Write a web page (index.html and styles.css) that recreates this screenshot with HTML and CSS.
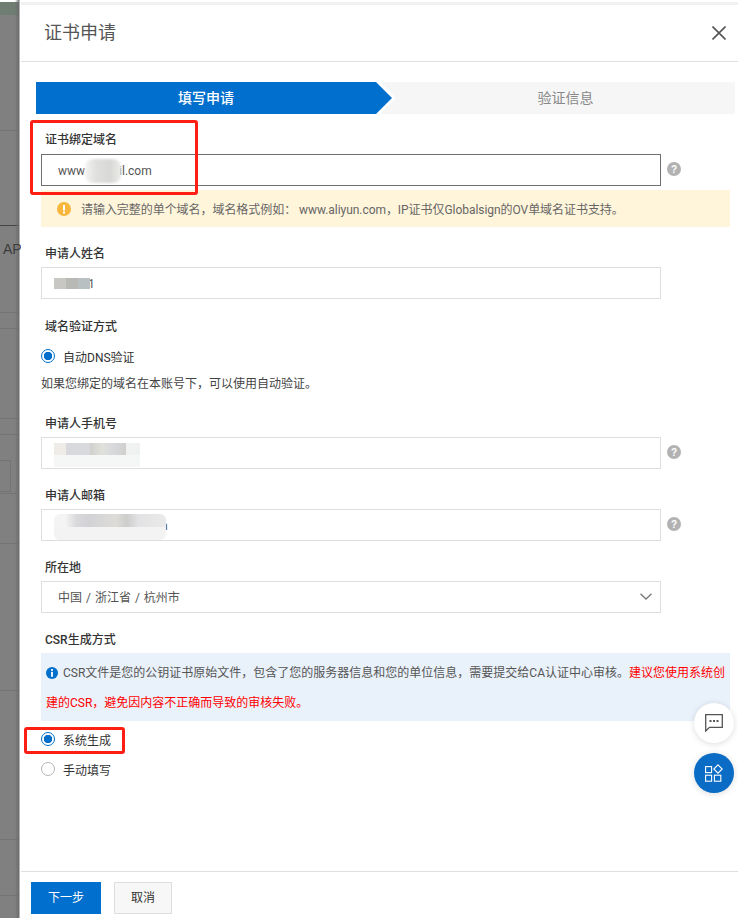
FILE: index.html
```html
<!DOCTYPE html>
<html lang="zh-CN">
<head>
<meta charset="utf-8">
<title>证书申请</title>
<link rel="stylesheet" href="styles.css">
</head>
<body>
<div class="backdrop"><span class="backdrop-text">AP</span></div>
<main class="panel">
  <header class="panel-header">
    <h1 class="panel-title">证书申请</h1>
    <svg class="close-icon" width="14" height="14" viewBox="0 0 14 14"><path d="M.5.5l13 13M13.500.5l-13 13" fill="none" stroke="#555" stroke-width="1.6"/></svg>
  </header>
  <div class="form">
    <div class="steps">
      <div class="step-edge"><div class="step-on">填写申请</div></div>
      <div class="step-off">验证信息</div>
    </div>

    <div class="field field-first">
      <div class="label label-wide">证书绑定域名</div>
      <div class="input-row">
        <div class="input input-active">www<span class="mask mask-domain"></span>il.com</div>
        <svg class="help" width="14" height="14" viewBox="0 0 14 14"><circle cx="7" cy="7" r="7" fill="#b2b2b2"/><text x="7" y="10.5" text-anchor="middle" class="help-mark">?</text></svg>
      </div>
      <div class="warn">
        <svg class="warn-icon" width="14" height="14" viewBox="0 0 14 14"><circle cx="7" cy="7" r="7" fill="#f6b73c"/><rect x="6" y="3" width="2" height="5.5" fill="#fff"/><rect x="6" y="9.5" width="2" height="2" fill="#fff"/></svg>
        <span>请输入完整的单个域名，域名格式例如： www.aliyun.com，IP证书仅Globalsign的OV单域名证书支持。</span>
      </div>
    </div>

    <div class="field field-name">
      <div class="label">申请人姓名</div>
      <div class="input-row">
        <div class="input"><span class="mask mask-name"></span><span class="tail-name">1</span></div>
      </div>
    </div>

    <div class="field field-verify">
      <div class="label">域名验证方式</div>
      <div class="radio-row radio-dns"><span class="radio radio-on"></span>自动DNS验证</div>
      <div class="hint">如果您绑定的域名在本账号下，可以使用自动验证。</div>
    </div>

    <div class="field field-phone">
      <div class="label">申请人手机号</div>
      <div class="input-row">
        <div class="input"><span class="mask mask-phone"></span></div>
        <svg class="help" width="14" height="14" viewBox="0 0 14 14"><circle cx="7" cy="7" r="7" fill="#b2b2b2"/><text x="7" y="10.5" text-anchor="middle" class="help-mark">?</text></svg>
      </div>
    </div>

    <div class="field field-mail">
      <div class="label">申请人邮箱</div>
      <div class="input-row">
        <div class="input"><span class="mask mask-mail"></span><span class="tail-mail">n</span></div>
        <svg class="help" width="14" height="14" viewBox="0 0 14 14"><circle cx="7" cy="7" r="7" fill="#b2b2b2"/><text x="7" y="10.5" text-anchor="middle" class="help-mark">?</text></svg>
      </div>
    </div>

    <div class="field field-mail">
      <div class="label">所在地</div>
      <div class="input-row">
        <div class="input input-select">
          <span class="region">中国 / 浙江省 / 杭州市</span>
          <svg width="12" height="7" viewBox="0 0 12 7"><path d="M.5.7L6 6l5.500-5.300" fill="none" stroke="#777" stroke-width="1.300"/></svg>
        </div>
      </div>
    </div>

    <div class="field field-mail">
      <div class="label">CSR生成方式</div>
      <div class="info">
        <svg class="info-icon" width="12" height="12" viewBox="0 0 12 12"><circle cx="6" cy="6" r="6" fill="#0070cc"/><rect x="5.100" y="2" width="1.800" height="1.800" fill="#fff"/><rect x="5.100" y="4.800" width="1.800" height="5" fill="#fff"/></svg>CSR文件是您的公钥证书原始文件，包含了您的服务器信息和您的单位信息，需要提交给CA认证中心审核。<span class="danger">建议您使用系统创<br>建的CSR，避免因内容不正确而导致的审核失败。</span>
      </div>
      <div class="radio-row radio-sys"><span class="radio radio-on"></span>系统生成</div>
      <div class="radio-row radio-manual"><span class="radio"></span>手动填写</div>
    </div>
  </div>
  <footer class="panel-footer">
    <button class="btn btn-primary">下一步</button>
    <button class="btn btn-cancel">取消</button>
  </footer>
</main>

<div class="fab fab-chat">
  <svg width="18" height="18" viewBox="0 0 18 18"><path d="M.7.7h16.600v12.600H4.500L.7 17z" fill="none" stroke="#555" stroke-width="1.300"/><rect x="4.500" y="6" width="2" height="2" fill="#555"/><rect x="8" y="6" width="2" height="2" fill="#555"/><rect x="11.500" y="6" width="2" height="2" fill="#555"/></svg>
</div>
<div class="fab fab-apps">
  <svg width="18" height="18" viewBox="0 0 18 18"><g fill="none" stroke="#fff" stroke-width="1.100"><rect x=".6" y="2.600" width="6" height="6"/><rect x=".6" y="11.200" width="6" height="6"/><rect x="9.400" y="11.200" width="6.400" height="6"/><path d="M13 .8l4.200 4.200-4.200 4.200L8.800 5z"/></g></svg>
</div>

<div class="mark mark-domain"></div>
<div class="mark mark-radio"></div>
</body>
</html>
```

FILE: styles.css
```css
* { box-sizing: border-box; }
html, body { margin: 0; padding: 0; }
body {
  position: relative;
  display: flex;
  width: 738px;
  height: 918px;
  overflow: hidden;
  background: #fff;
  font-family: Roboto, "Noto Sans CJK SC", sans-serif;
  font-size: 12px;
  color: #555;
}

/* dimmed page behind the drawer */
.backdrop {
  width: 21px;
  flex: none;
  padding: 241px 0 0 3px;
  overflow: hidden;
  background:
    linear-gradient(to right, transparent 15px, #696969 19.500px, #b4b4b4 19.500px, #b4b4b4 20.500px, #fff 20.500px),
    linear-gradient(#fff, #fff) 0 0 / 100% 2px no-repeat,
    linear-gradient(#6f7d72, #6f7d72) 0 2px / 100% 13px no-repeat,
    linear-gradient(#747474, #747474) 0 130px / 100% 1px no-repeat,
    linear-gradient(#444, #444) 0 225px / 100% 1px no-repeat,
    linear-gradient(#747474, #747474) 0 312px / 100% 1px no-repeat,
    linear-gradient(#747474, #747474) 0 328px / 100% 1px no-repeat,
    linear-gradient(#747474, #747474) 0 418px / 100% 1px no-repeat,
    linear-gradient(#747474, #747474) 0 434px / 100% 1px no-repeat,
    linear-gradient(#747474, #747474) 0 460px / 11px 1px no-repeat,
    linear-gradient(#747474, #747474) 0 491px / 11px 1px no-repeat,
    linear-gradient(#747474, #747474) 10px 460px / 1px 32px no-repeat,
    linear-gradient(#747474, #747474) 0 493px / 100% 1px no-repeat,
    linear-gradient(#747474, #747474) 0 543px / 100% 1px no-repeat,
    linear-gradient(#747474, #747474) 0 690px / 100% 1px no-repeat,
    linear-gradient(#747474, #747474) 0 839px / 100% 1px no-repeat,
    linear-gradient(#747474, #747474) 0 895px / 100% 1px no-repeat,
    #808080;
}
.backdrop-text {
  display: block;
  font-family: "Liberation Sans", sans-serif;
  font-size: 14px;
  line-height: 16px;
  color: #3c3c3c;
  white-space: nowrap;
}

/* drawer */
.panel {
  flex: 1;
  display: flex;
  flex-direction: column;
  min-width: 0;
  padding-top: 2px;
}
.panel-header {
  display: flex;
  align-items: center;
  justify-content: space-between;
  height: 60px;
  padding: 0 12px 0 23px;
  border-top: 3px solid #f1f1f1;
  border-bottom: 1px solid #e0e0e0;
}
.panel-title {
  margin: 0;
  font-size: 18px;
  font-weight: 400;
  line-height: 24px;
  color: #555;
}
.close-icon { display: block; }

.form {
  flex: 1;
  padding: 20px 3px 0 15px;
}
.steps {
  position: relative;
  display: flex;
  height: 32px;
  background: #f6f6f6;
  color: #888;
  font-size: 14px;
  line-height: 32px;
  text-align: center;
}
.step-edge {
  width: 360px;
  flex: none;
  background: #fff;
  clip-path: polygon(0 0, 344px 0, 360px 16px, 344px 32px, 0 32px);
}
.step-on {
  width: 356px;
  height: 32px;
  padding-right: 16px;
  background: #006fcd;
  color: #fff;
  font-weight: 500;
  clip-path: polygon(0 0, 340px 0, 356px 16px, 340px 32px, 0 32px);
}
.step-off { flex: 1; }

.field { margin-left: 5px; width: 689px; }
.field-first { margin-top: 17px; }
.field-name { margin-top: 18px; }
.field-verify { margin-top: 19px; }
.field-phone { margin-top: 23px; }
.field-mail { margin-top: 18px; }

.label {
  height: 16px;
  margin-bottom: 6px;
  padding-left: 4px;
  font-size: 12px;
  font-weight: 500;
  line-height: 18px;
  color: #333;
}
.label-wide { margin-bottom: 7px; }

.input-row {
  display: flex;
  align-items: center;
  gap: 6px;
}
.input {
  display: flex;
  align-items: center;
  width: 620px;
  height: 32px;
  padding: 2px 8px 0 16px;
  border: 1px solid #dedede;
  background: #fff;
  line-height: 28px;
  color: #555;
}
.input-active { border-color: #6f6f6f; }
.input-select { justify-content: space-between; }
.input-select svg { margin-top: -3px; }
.region { word-spacing: 1px; }
.help { display: block; flex: none; margin-bottom: 2px; }
.help-mark {
  fill: #fff;
  font-family: "Liberation Sans", sans-serif;
  font-size: 10px;
  font-weight: 700;
}

/* redacted values */
.mask { display: block; flex: none; }
.mask-domain {
  width: 36px;
  height: 24px;
  margin: 0 -2px 1px 0;
  border-radius: 8px;
  filter: blur(1px);
  background: linear-gradient(to right, #f4f4f2, #e0e0de 30%, #d8d8d6 70%, #ecece9);
}
.mask-name {
  width: 36px;
  height: 11px;
  margin: 0 0 2px -4px;
  filter: blur(.4px);
  background: linear-gradient(to right, #c9c7c3 33%, #b8b8b4 33%, #b8b8b4 66%, #b9c0c2 66%);
}
.tail-name { margin-left: -2px; }
.mask-phone {
  width: 86px;
  height: 24px;
  margin: 0 0 -2px -4px;
  filter: blur(.4px);
  background:
    linear-gradient(to right, #efebe7 14%, #d7d9dd 14%, #d7d9dd 42%, #cfcfcd 42%, #e1e1db 56%, #d6d8dc 70%, #cfcfcb 84%, #f0f2f2 84%) 0 0 / 100% 50% no-repeat,
    #f5f6f6;
}
.mask-mail {
  width: 112px;
  height: 26px;
  margin: 0 0 -2px -4px;
  border-radius: 6px;
  filter: blur(.6px);
  background:
    linear-gradient(to right, #f4f4f4 10%, #d9d9dc 20%, #d2d2d6 32%, #dedcd8 55%, #cdcdcb 65%, #e2e2e4 75%, #eaeaea 100%) 0 0 / 100% 50% no-repeat,
    #f3f3f3;
}
.tail-mail { margin-left: -5px; }

.warn {
  display: flex;
  align-items: center;
  gap: 10px;
  height: 37px;
  margin-top: 4px;
  padding-left: 16px;
  background: #fff5da;
  color: #666;
  letter-spacing: -.05px;
}
.warn-icon { display: block; flex: none; }

.radio-row {
  display: flex;
  align-items: center;
  gap: 8px;
  height: 20px;
  color: #333;
}
.radio-dns { margin-top: 12px; margin-bottom: 10px; }
.radio-sys { margin-top: 8px; }
.radio-manual { margin-top: 10px; }
.radio {
  display: block;
  width: 14px;
  height: 14px;
  flex: none;
  border: 1px solid #b5b5b5;
  border-radius: 50%;
  background: #fff;
}
.radio-on {
  border-color: #0070cc;
  background: radial-gradient(circle, #0070cc 4px, #fff 4.500px);
}
.hint {
  line-height: 16px;
  color: #444;
}

.info {
  height: 68px;
  padding: 6px 0 4px 5px;
  background: #e9f1fa;
  line-height: 29.500px;
  color: #555;
}
.info-icon { display: inline-block; margin-right: 5px; vertical-align: -2px; }
.danger { color: #f00; }

.panel-footer {
  display: flex;
  gap: 13px;
  height: 47px;
  padding: 10px 0 0 10px;
  border-top: 1px solid #e0e0e0;
}
.btn {
  height: 32px;
  padding: 0;
  font: inherit;
  line-height: 30px;
}
.btn-primary {
  width: 70px;
  border: 0;
  background: #006fcd;
  color: #fff;
}
.btn-cancel {
  width: 58px;
  border: 1px solid #dedede;
  background: #f7f7f7;
  color: #333;
}

/* floating buttons */
.fab {
  position: absolute;
  left: 694px;
  display: flex;
  align-items: center;
  justify-content: center;
  width: 40px;
  height: 40px;
  border-radius: 50%;
  box-shadow: 0 1px 6px rgba(0, 0, 0, .14);
}
.fab-chat { top: 703px; background: #fff; }
.fab-apps { top: 753px; background: #0a6cc4; }

/* red annotation boxes */
.mark {
  position: absolute;
  border: 3px solid #ff1e14;
  border-radius: 3px;
}
.mark-domain { left: 30px; top: 120px; width: 168px; height: 75px; }
.mark-radio { left: 24px; top: 727px; width: 101px; height: 27px; }
```
